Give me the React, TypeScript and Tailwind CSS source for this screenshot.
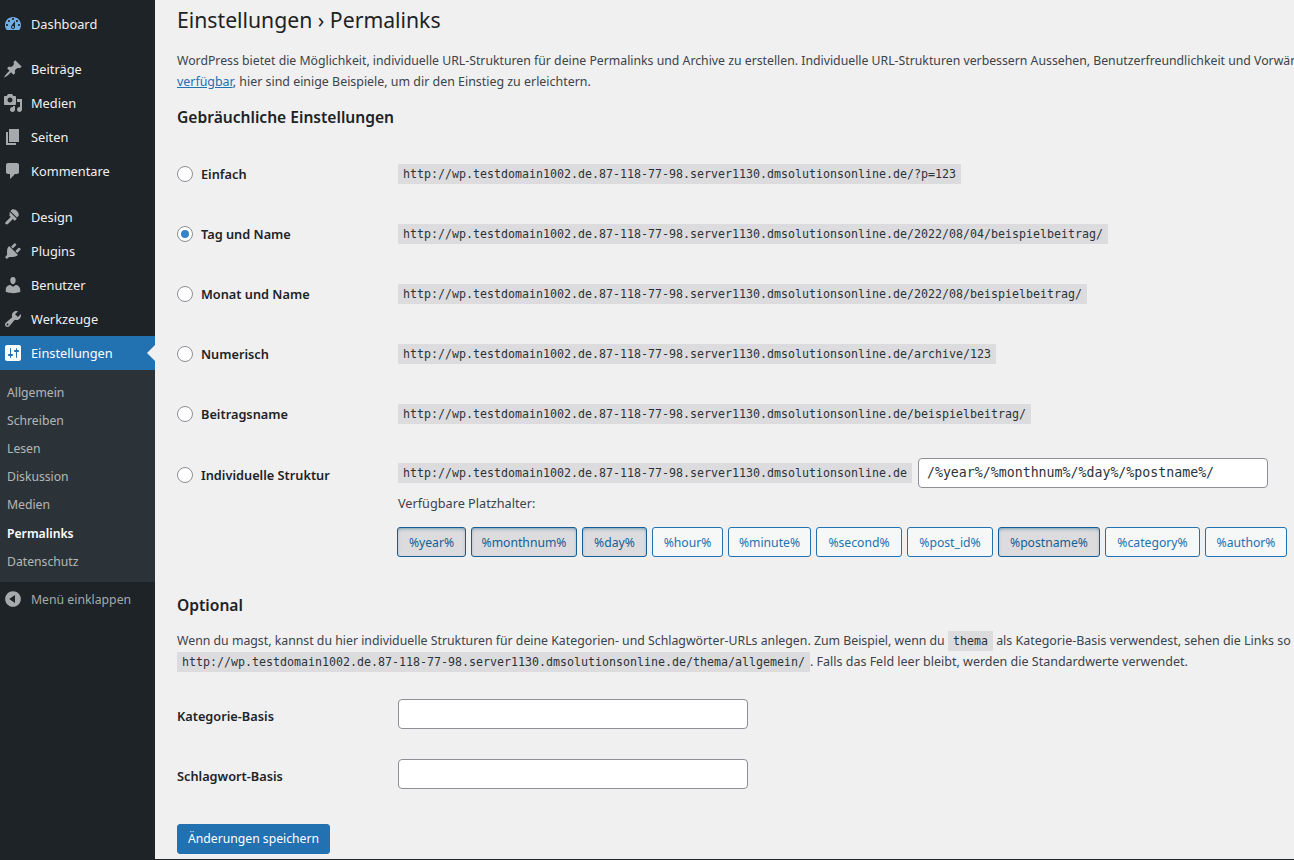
import React from "react";

const P: Record<string, string> = {
  dashboard: "M3.76 16h12.48c1.1-1.37 1.76-3.11 1.76-5 0-4.42-3.58-8-8-8s-8 3.58-8 8c0 1.89.66 3.63 1.76 5zM10 4c.55 0 1 .45 1 1s-.45 1-1 1-1-.45-1-1 .45-1 1-1zM6 6c.55 0 1 .45 1 1s-.45 1-1 1-1-.45-1-1 .45-1 1-1zm8 0c.55 0 1 .45 1 1s-.45 1-1 1-1-.45-1-1 .45-1 1-1zm-5.37 5.55L12 7v6c0 1.1-.9 2-2 2s-2-.9-2-2c0-.57.24-1.08.63-1.45zM4 10c.55 0 1 .45 1 1s-.45 1-1 1-1-.45-1-1 .45-1 1-1zm12 0c.55 0 1 .45 1 1s-.45 1-1 1-1-.45-1-1 .45-1 1-1zm-5 3c0-.55-.45-1-1-1s-1 .45-1 1 .45 1 1 1 1-.45 1-1z",
  post: "M10.44 3.02l1.82-1.82 6.36 6.35-1.83 1.82c-1.05-.68-2.48-.57-3.41.36l-.75.75c-.92.93-1.04 2.35-.35 3.41l-1.83 1.82-2.41-2.41-2.8 2.79c-.42.42-3.38 2.71-3.8 2.29s1.86-3.39 2.28-3.81l2.79-2.79L4.1 9.36l1.83-1.82c1.05.69 2.48.57 3.4-.36l.75-.75c.93-.92 1.05-2.35.36-3.41z",
  media: "M13 11V4c0-.55-.45-1-1-1h-1.67L9 1H5L3.67 3H2c-.55 0-1 .45-1 1v7c0 .55.45 1 1 1h10c.55 0 1-.45 1-1zM7 4.5c1.38 0 2.5 1.12 2.5 2.5S8.38 9.5 7 9.5 4.5 8.38 4.5 7 5.62 4.5 7 4.5zM14 6h5v10.5c0 1.38-1.12 2.5-2.5 2.5S14 17.88 14 16.5s1.12-2.5 2.5-2.5c.17 0 .34.02.5.05V9h-3V6zm-4 8.05V13h2v3.5c0 1.38-1.12 2.5-2.5 2.5S7 17.88 7 16.5 8.12 14 9.5 14c.17 0 .34.02.5.05z",
  page: "M6 15V2h10v13H6zm-1 1h8v2H3V5h2v11z",
  comments: "M5 2h9c1.1 0 2 .9 2 2v7c0 1.1-.9 2-2 2h-2l-5 5v-5H5c-1.1 0-2-.9-2-2V4c0-1.1.9-2 2-2z",
  appearance: "M14.48 11.06L7.41 3.99l1.5-1.5c.5-.56 2.3-.47 3.51.32.46.3 1.21.8 1.55 1.14.34.34.84 1.09 1.14 1.55.8 1.21.89 3.01.33 3.51l-1.46 1.55zM6.7 4.7l7.1 7.1-1.4 1.4c-.4.4-1 .4-1.4 0l-1.1-1.1-5 5c-.6.6-1.6.6-2.2 0-.6-.6-.6-1.6 0-2.2l5-5-1.1-1.1c-.4-.4-.4-1 0-1.4z",
  plugins: "M13.11 4.36L9.87 7.6 8 5.73l3.24-3.24c.35-.34 1.05-.2 1.56.32.52.51.66 1.21.31 1.55zm-8 1.77l.91-1.12 9.01 9.01-1.19.84c-.71.71-2.63 1.16-3.82 1.16H6.14L4.9 17.26c-.59.59-1.54.59-2.12 0-.59-.58-.59-1.53 0-2.12l1.24-1.24v-3.88c0-1.13.4-3.19 1.09-3.89zm7.26 3.97l3.24-3.24c.34-.35 1.04-.21 1.55.31.52.51.66 1.21.31 1.55l-3.24 3.25z",
  users: "M10 9.25c-2.27 0-2.73-3.44-2.73-3.44C7 4.02 7.82 2 9.97 2c2.16 0 2.98 2.02 2.71 3.81 0 0-.41 3.44-2.68 3.44zm0 2.57L12.72 10c2.39 0 4.52 2.33 4.52 4.53v2.49s-3.65 1.13-7.24 1.13c-3.65 0-7.24-1.13-7.24-1.13v-2.49c0-2.25 1.94-4.48 4.47-4.48z",
  tools: "M16.68 9.77c-1.34 1.34-3.3 1.67-4.95.99l-5.41 6.52c-.99.99-2.59.99-3.58 0s-.99-2.59 0-3.57l6.52-5.42c-.68-1.65-.35-3.61.99-4.95 1.28-1.28 3.12-1.62 4.72-1.06l-2.89 2.89 2.82 2.82 2.86-2.87c.53 1.58.18 3.39-1.08 4.65zM3.81 16.21c.4.39 1.04.39 1.43 0 .4-.4.4-1.04 0-1.43-.39-.4-1.03-.4-1.43 0-.39.39-.39 1.03 0 1.43z",
  settings: "M18 16V4c0-1.1-.9-2-2-2H4c-1.1 0-2 .9-2 2v12c0 1.1.9 2 2 2h12c1.1 0 2-.9 2-2zM8 11h1c.55 0 1 .45 1 1s-.45 1-1 1H8v1.5c0 .28-.22.5-.5.5s-.5-.22-.5-.5V13H6c-.55 0-1-.45-1-1s.45-1 1-1h1V5.5c0-.28.22-.5.5-.5s.5.22.5.5V11zm5-2h-1c-.55 0-1-.45-1-1s.45-1 1-1h1V5.5c0-.28.22-.5.5-.5s.5.22.5.5V7h1c.55 0 1 .45 1 1s-.45 1-1 1h-1v5.5c0 .28-.22.5-.5.5s-.5-.22-.5-.5V9z",
  collapse: "M10 2.16c4.33 0 7.84 3.51 7.84 7.84s-3.51 7.84-7.84 7.84S2.16 14.33 2.16 10 5.71 2.16 10 2.16zm2 11.72V6.12L6.18 9.97z",
};

function Icon({ name, className }: { name: string; className: string }) {
  return (
    <svg viewBox="0 0 20 20" className={className} fill="currentColor" fillRule="evenodd">
      <path d={P[name]} />
    </svg>
  );
}

function Item({ icon, label, active, blue }: { icon: string; label: string; active?: boolean; blue?: boolean }) {
  return (
    <div className={`relative flex h-[34px] items-center ${active ? "bg-[#2271b1] text-white" : "text-[#f0f0f1]"}`}>
      <div className="flex w-[31px] justify-center pr-[5px]">
        <Icon name={icon} className={`h-5 w-5 ${active ? "text-white" : blue ? "text-[#72aee6]" : "text-[#a7aaad]"}`} />
      </div>
      <span className="pt-[2px] text-[12.8px]">{label}</span>
      {active && <div className="absolute right-0 top-[9px] h-0 w-0 border-y-[8px] border-r-[8px] border-y-transparent border-r-[#f0f0f1]" />}
    </div>
  );
}

const mono = "font-['DejaVu_Sans_Mono',monospace] leading-[20px]";

function Code({ children }: { children: React.ReactNode }) {
  return <code className={`${mono} inline-block whitespace-nowrap bg-[#dcdcde] px-[5px] text-[11.63px] text-[#2c3338]`}>{children}</code>;
}

function Radio({ checked }: { checked?: boolean }) {
  return (
    <span className="flex h-4 w-4 shrink-0 items-center justify-center rounded-full border border-[#8c8f94] bg-white">
      {checked && <span className="h-2 w-2 rounded-full bg-[#3582c4]" />}
    </span>
  );
}

const base = "http://wp.testdomain1002.de.87-118-77-98.server1130.dmsolutionsonline.de";

function Row({ label, tail, checked }: { label: string; tail: string; checked?: boolean }) {
  return (
    <div className="flex h-[60px] items-center">
      <div className="flex w-[221px] shrink-0 items-center gap-2 text-[12.75px] font-semibold text-[#1d2327]">
        <Radio checked={checked} />
        <span className="pt-[2px]">{label}</span>
      </div>
      <Code>{base + tail}</Code>
    </div>
  );
}

function Tag({ children, on, w }: { children: React.ReactNode; on?: boolean; w: string }) {
  return (
    <span
      className={`flex h-[30px] items-center justify-center rounded-[3px] border pt-[2px] ${w} ${
        on ? "border-[#135e96] bg-[#dcdcde] text-[#135e96] shadow-[inset_0_2px_5px_-3px_#0a4b78]" : "border-[#2271b1] bg-[#f6f7f7] text-[#2271b1]"
      }`}
    >
      {children}
    </span>
  );
}

const subs = ["Allgemein", "Schreiben", "Lesen", "Diskussion", "Medien", "Permalinks", "Datenschutz"];

export default function App() {
  return (
    <div className="relative flex h-[860px] w-[1294px] overflow-hidden bg-[#f0f0f1] font-['Noto_Sans',sans-serif] text-[12.35px] text-[#3c434a]">
      <aside className="flex w-[155px] shrink-0 flex-col bg-[#1d2327] pt-[7px]">
        <Item icon="dashboard" label="Dashboard" blue />
        <div className="h-[11px]" />
        <Item icon="post" label="Beiträge" />
        <Item icon="media" label="Medien" />
        <Item icon="page" label="Seiten" />
        <Item icon="comments" label="Kommentare" />
        <div className="h-3" />
        <Item icon="appearance" label="Design" />
        <Item icon="plugins" label="Plugins" />
        <Item icon="users" label="Benutzer" />
        <Item icon="tools" label="Werkzeuge" />
        <Item icon="settings" label="Einstellungen" active />
        <div className="flex h-[212px] flex-col bg-[#2c3338] pt-[9px]">
          {subs.map((s) => (
            <div
              key={s}
              className={`flex h-[28px] items-center pl-[7px] text-[12.2px] ${s === "Permalinks" ? "mt-px font-semibold text-white" : "text-[#f0f0f1]/70"}`}
            >
              {s}
            </div>
          ))}
        </div>
        <div className="flex h-[34px] items-center text-[#a7aaad]">
          <div className="flex w-[31px] justify-center pr-[5px]">
            <Icon name="collapse" className="h-5 w-5" />
          </div>
          <span className="pt-[2px] text-[12.25px]">Menü einklappen</span>
        </div>
      </aside>

      <main className="min-w-0 flex-1 pl-[22px]">
        <h1 className="h-[41px] whitespace-nowrap text-[21.2px] leading-[39px] text-[#1d2327]">Einstellungen › Permalinks</h1>
        <p className="mt-[9px] whitespace-nowrap leading-[21px]">
          <span className="text-[12.28px]">
            WordPress bietet die Möglichkeit, individuelle URL-Strukturen für deine Permalinks und Archive zu erstellen. Individuelle URL-Strukturen verbessern Aussehen, Benutzerfreundlichkeit und Vorwärtskompatibilität
          </span>
          <br />
          <span className="text-[12.42px]">
            <a className="text-[#2271b1] underline">verfügbar</a>, hier sind einige Beispiele, um dir den Einstieg zu erleichtern.
          </span>
        </p>
        <h2 className="mt-[15px] h-[21px] text-[15.6px] font-semibold leading-[21px] text-[#1d2327]">Gebräuchliche Einstellungen</h2>

        <div className="mt-[16px]">
          <Row label="Einfach" tail="/?p=123" />
          <Row label="Tag und Name" tail="/2022/08/04/beispielbeitrag/" checked />
          <Row label="Monat und Name" tail="/2022/08/beispielbeitrag/" />
          <Row label="Numerisch" tail="/archive/123" />
          <Row label="Beitragsname" tail="/beispielbeitrag/" />
        </div>

        <div className="flex pt-[1px]">
          <div className="flex h-[60px] w-[221px] shrink-0 items-center gap-2 text-[12.75px] font-semibold text-[#1d2327]">
            <Radio />
            <span className="pt-[2px]">Individuelle Struktur</span>
          </div>
          <div className="pt-[13px]">
            <div className="flex items-center gap-[6px]">
              <Code>{base}</Code>
              <div className={`${mono} flex h-[30px] w-[350px] items-center rounded border border-[#8c8f94] bg-white px-2 text-[13.25px] text-[#2c3338]`}>
                /%year%/%monthnum%/%day%/%postname%/
              </div>
            </div>
            <p className="mt-[5px] text-[12.7px] leading-[21px]">Verfügbare Platzhalter:</p>
            <div className="mt-[13px] -ml-px flex gap-[5px] whitespace-nowrap text-[12.2px]">
              <Tag on w="w-[69px]">%year%</Tag>
              <Tag on w="w-[106px]">%monthnum%</Tag>
              <Tag on w="w-[65px]">%day%</Tag>
              <Tag w="w-[71px]">%hour%</Tag>
              <Tag w="w-[83px]">%minute%</Tag>
              <Tag w="w-[86px]">%second%</Tag>
              <Tag w="w-[86px]">%post_id%</Tag>
              <Tag on w="w-[102px]">%postname%</Tag>
              <Tag w="w-[95px]">%category%</Tag>
              <Tag w="w-[82px]">%author%</Tag>
            </div>
          </div>
        </div>

        <h2 className="mt-[38px] h-[21px] text-[15.6px] font-semibold leading-[21px] text-[#1d2327]">Optional</h2>
        <p className="mt-[14px] whitespace-nowrap leading-[21px]">
          <span className="text-[12.3px]">Wenn du magst, kannst du hier individuelle Strukturen für deine Kategorien- und Schlagwörter-URLs anlegen. Zum Beispiel, wenn du </span>
          <Code>thema</Code>
          <span className="text-[12.45px]"> als Kategorie-Basis verwendest, sehen die Links so</span>
          <br />
          <Code>{base + "/thema/allgemein/"}</Code>
          <span className="text-[12.5px]">. Falls das Feld leer bleibt, werden die Standardwerte verwendet.</span>
        </p>

        <div className="mt-[12px]">
          {["Kategorie-Basis", "Schlagwort-Basis"].map((l) => (
            <div key={l} className="flex h-[60px] items-center">
              <div className="w-[221px] shrink-0 pt-[5px] text-[12.75px] font-semibold text-[#1d2327]">{l}</div>
              <div className="h-[30px] w-[350px] rounded border border-[#8c8f94] bg-white" />
            </div>
          ))}
        </div>

        <button className="mt-[20px] h-[30px] rounded-[3px] border border-[#2271b1] bg-[#2271b1] px-[10px] text-[12.2px] text-white">
          Änderungen speichern
        </button>
      </main>
      <div className="absolute inset-x-0 bottom-0 h-px bg-[#1d2327]" />
    </div>
  );
}
